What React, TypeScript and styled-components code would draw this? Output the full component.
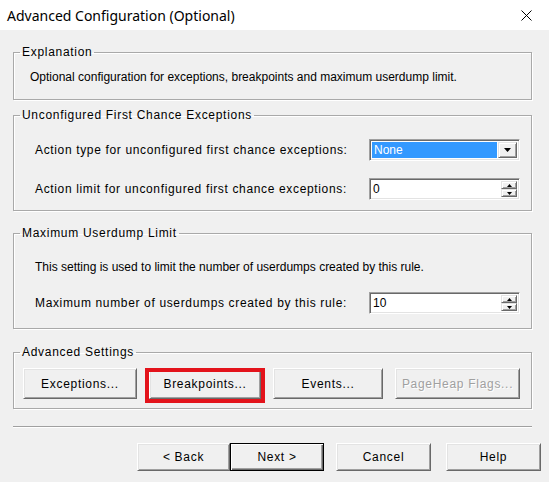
import styled, { createGlobalStyle } from "styled-components";

const GlobalStyle = createGlobalStyle`
  html, body {
    margin: 0;
    padding: 0;
    background: #f0f0f0;
  }
  body {
    font-family: "Liberation Sans", Arial, sans-serif;
    font-size: 12px;
    color: #000;
  }
`;

export default function App() {
  return (
    <>
      <GlobalStyle />
      <Window>
        <TitleBar>
          <Title>Advanced Configuration (Optional)</Title>
          <CloseIcon width="11" height="11" viewBox="0 0 11 11">
            <path d="M0.5 0.5 L10.5 10.5 M10.5 0.5 L0.5 10.5" stroke="#000" strokeWidth="1" />
          </CloseIcon>
        </TitleBar>

        <Body>
          <GroupBox $mt={15}>
            <Legend>Explanation</Legend>
            <GroupContent $pt={11} $pb={15} $pl={16}>
              <Text>
                Optional configuration for exceptions, breakpoints and maximum userdump limit.
              </Text>
            </GroupContent>
          </GroupBox>

          <GroupBox $mt={8}>
            <Legend>Unconfigured First Chance Exceptions</Legend>
            <GroupContent $pt={17} $pb={10} $gap={17}>
              <Row>
                <Text $wide>Action type for unconfigured first chance exceptions:</Text>
                <Combo>
                  <ComboValue>None</ComboValue>
                  <ArrowButton>
                    <svg width="7" height="4" viewBox="0 0 7 4">
                      <path d="M0 0 H7 L3.5 4 Z" fill="#000" />
                    </svg>
                  </ArrowButton>
                </Combo>
              </Row>
              <Row>
                <Text $wide>Action limit for unconfigured first chance exceptions:</Text>
                <SpinBox value="0" />
              </Row>
            </GroupContent>
          </GroupBox>

          <GroupBox $mt={15}>
            <Legend>Maximum Userdump Limit</Legend>
            <GroupContent $pt={20} $pb={14} $gap={18}>
              <Text>This setting is used to limit the number of userdumps created by this rule.</Text>
              <Row>
                <Text $wide>Maximum number of userdumps created by this rule:</Text>
                <SpinBox value="10" />
              </Row>
            </GroupContent>
          </GroupBox>

          <GroupBox $mt={16}>
            <Legend>Advanced Settings</Legend>
            <GroupContent $pt={9} $pb={9} $pl={9}>
              <ButtonRow>
                <Button $width={115}>Exceptions...</Button>
                <Highlight>
                  <Button $width={112}>Breakpoints...</Button>
                </Highlight>
                <Button $width={111}>Events...</Button>
                <Button $width={126} disabled>
                  PageHeap Flags...
                </Button>
              </ButtonRow>
            </GroupContent>
          </GroupBox>

          <Separator />

          <Footer>
            <Button $width={93} $height={28}>&lt; Back</Button>
            <Button $width={94} $height={28} $default>
              Next &gt;
            </Button>
            <Button $width={95} $height={28} $ml={12}>Cancel</Button>
            <Button $width={95} $height={28} $ml={15}>Help</Button>
          </Footer>
        </Body>
      </Window>
    </>
  );
}

function SpinBox({ value }: { value: string }) {
  return (
    <Spin>
      <SpinValue>{value}</SpinValue>
      <SpinButtons>
        <SpinButton>
          <svg width="5" height="3" viewBox="0 0 5 3">
            <path d="M2.5 0 L5 3 H0 Z" fill="#000" />
          </svg>
        </SpinButton>
        <SpinButton>
          <svg width="5" height="3" viewBox="0 0 5 3">
            <path d="M0 0 H5 L2.5 3 Z" fill="#000" />
          </svg>
        </SpinButton>
      </SpinButtons>
    </Spin>
  );
}

const Window = styled.div`
  width: 549px;
  height: 482px;
  display: flex;
  flex-direction: column;
  background: #f0f0f0;
  overflow: hidden;
`;

const TitleBar = styled.div`
  height: 30px;
  flex-shrink: 0;
  background: #fff;
  display: flex;
  align-items: center;
  justify-content: space-between;
  padding: 0 17px 0 7px;
`;

const Title = styled.div`
  font-family: "Noto Sans", "Open Sans", sans-serif;
  font-size: 14px;
  color: #000;
`;

const CloseIcon = styled.svg`
  display: block;
`;

const Body = styled.div`
  display: flex;
  flex-direction: column;
  padding: 0 17px 0 13px;
`;

const GroupBox = styled.fieldset<{ $mt: number }>`
  margin: ${(p) => p.$mt}px 0 0;
  padding: 0;
  min-width: 0;
  border: 1px solid #a9a9a9;
  box-shadow: inset 1px 1px 0 #fff, 1px 1px 0 #fff;
`;

const Legend = styled.legend`
  margin-left: 6px;
  padding: 0 2px;
  font-size: 12px;
  line-height: 14px;
  letter-spacing: 0.7px;
`;

const GroupContent = styled.div<{ $pt: number; $pb: number; $pl?: number; $gap?: number }>`
  display: flex;
  flex-direction: column;
  gap: ${(p) => p.$gap ?? 0}px;
  padding: ${(p) => p.$pt}px 11px ${(p) => p.$pb}px ${(p) => p.$pl ?? 21}px;
`;

const Text = styled.div<{ $wide?: boolean }>`
  font-size: 12px;
  line-height: 14px;
  white-space: nowrap;
  letter-spacing: ${(p) => (p.$wide ? "0.65px" : "0")};
`;

const Row = styled.div`
  display: flex;
  align-items: center;
  justify-content: space-between;
  height: 22px;
`;

const Sunken = styled.div`
  box-sizing: border-box;
  width: 151px;
  height: 22px;
  display: flex;
  background: #fff;
  border: 1px solid;
  border-color: #a0a0a0 #fff #fff #a0a0a0;
  box-shadow: inset 1px 1px 0 #696969, inset -1px -1px 0 #e3e3e3;
  padding: 2px;
`;

const Combo = styled(Sunken)``;

const ComboValue = styled.div`
  flex: 1;
  background: #3399ff;
  color: #fff;
  line-height: 16px;
  padding-left: 2px;
`;

const Raised = styled.div`
  box-sizing: border-box;
  display: flex;
  align-items: center;
  justify-content: center;
  background: #f0f0f0;
  border: 1px solid;
  border-color: #e3e3e3 #696969 #696969 #e3e3e3;
  box-shadow: inset 1px 1px 0 #fff, inset -1px -1px 0 #a0a0a0;
`;

const ArrowButton = styled(Raised)`
  width: 19px;
  margin-left: 1px;
`;

const Spin = styled(Sunken)``;

const SpinValue = styled.div`
  flex: 1;
  line-height: 16px;
  padding-left: 1px;
`;

const SpinButtons = styled.div`
  width: 16px;
  display: flex;
  flex-direction: column;
`;

const SpinButton = styled(Raised)`
  flex: 1;
`;

const ButtonRow = styled.div`
  display: flex;
  align-items: center;
  gap: 12px;
`;

const Button = styled.button<{ $width: number; $height?: number; $default?: boolean; $ml?: number }>`
  box-sizing: border-box;
  width: ${(p) => p.$width}px;
  height: ${(p) => p.$height ?? 31}px;
  margin-left: ${(p) => p.$ml ?? 0}px;
  padding: 0;
  font-family: "Liberation Sans", Arial, sans-serif;
  font-size: 12px;
  letter-spacing: 0.7px;
  color: #000;
  background: #f0f0f0;
  border: 1px solid;
  border-color: ${(p) => (p.$default ? "#000" : "#fff #696969 #696969 #fff")};
  box-shadow: ${(p) =>
    p.$default
      ? "inset 1px 1px 0 #fff, inset -1px -1px 0 #696969, inset -2px -2px 0 #a0a0a0"
      : "inset 1px 1px 0 #e3e3e3, inset -1px -1px 0 #a0a0a0"};

  &:disabled {
    color: #a0a0a0;
    text-shadow: 1px 1px 0 #fff;
  }
`;

/* red frame drawn over the Breakpoints button */
const Highlight = styled.div`
  position: relative;
  display: flex;

  &::after {
    content: "";
    position: absolute;
    top: 0;
    left: -4px;
    right: -4px;
    bottom: -4px;
    border: 4px solid #e3131b;
    pointer-events: none;
  }
`;

const Separator = styled.div`
  margin-top: 17px;
  height: 1px;
  background: #a0a0a0;
  border-bottom: 1px solid #fff;
`;

const Footer = styled.div`
  display: flex;
  justify-content: flex-end;
  margin-top: 15px;
  margin-right: -9px;
`;
